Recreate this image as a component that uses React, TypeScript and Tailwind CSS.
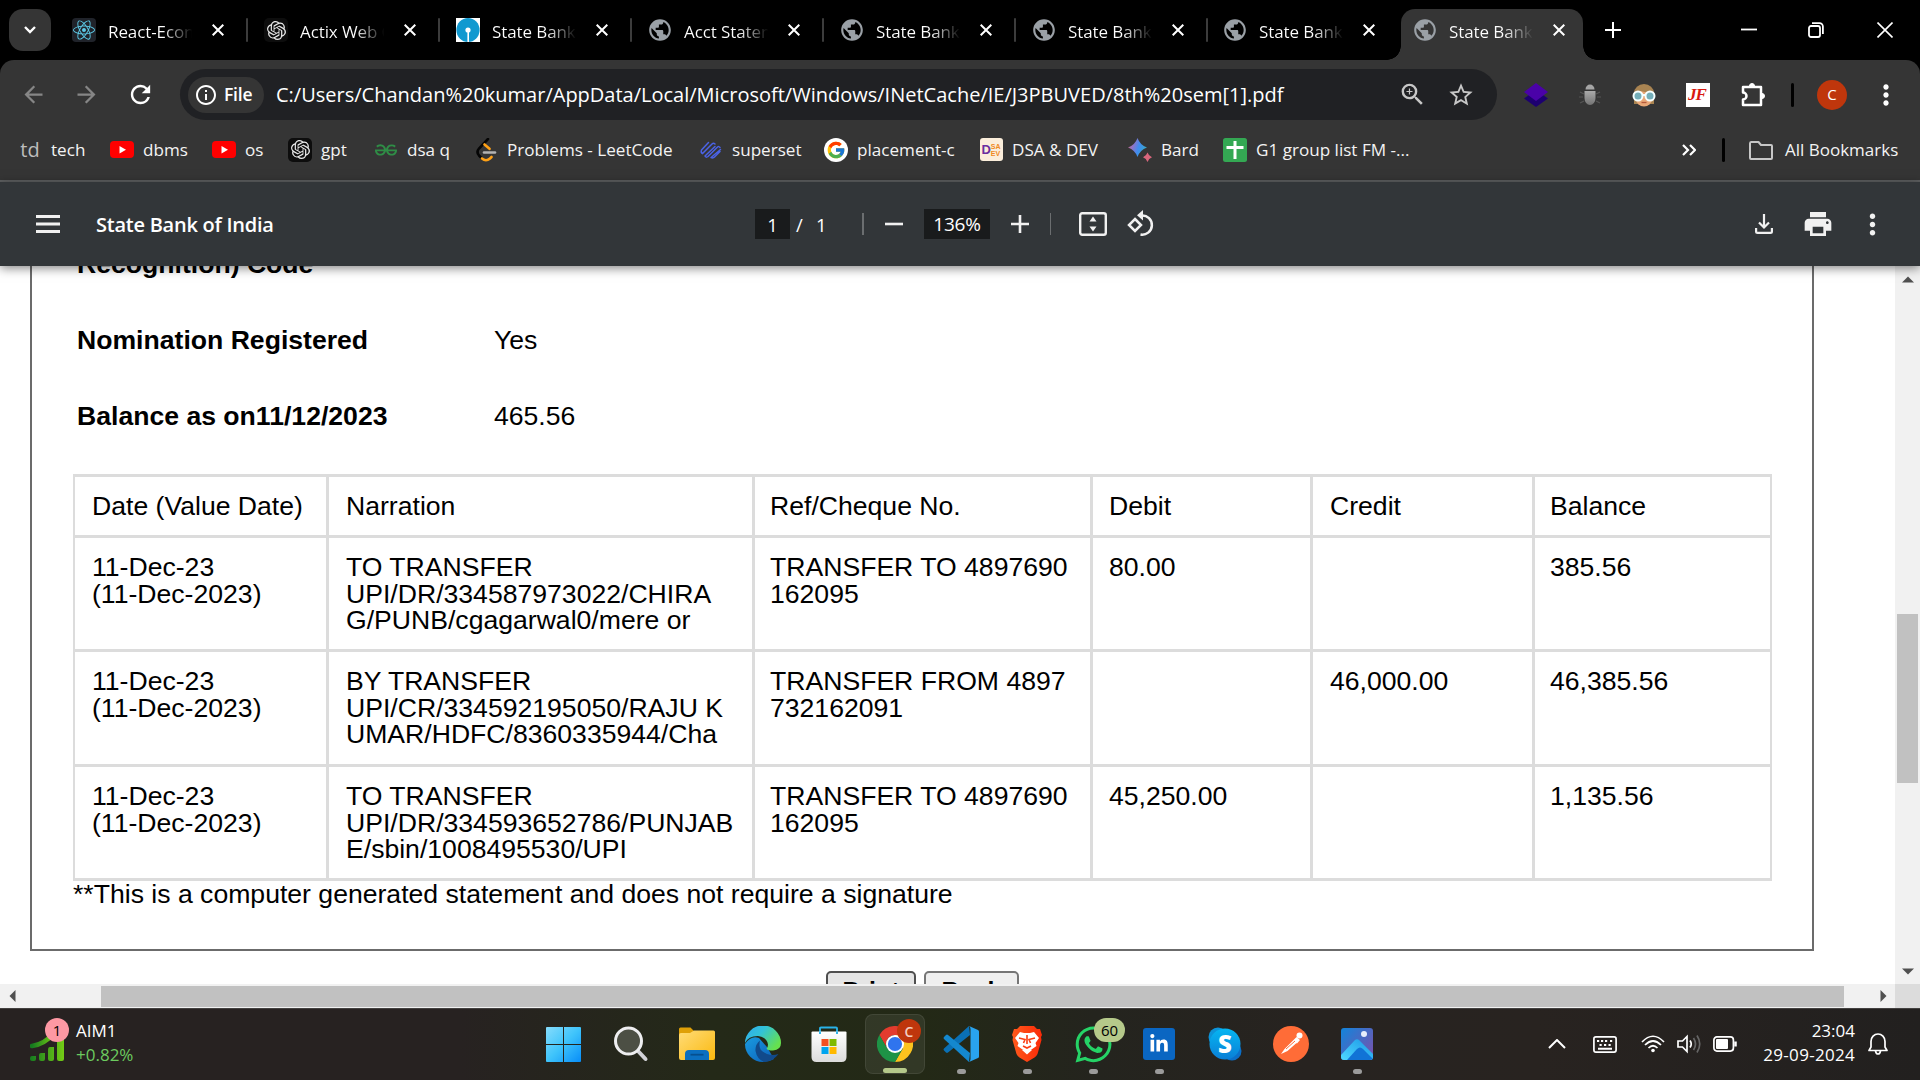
import type { ReactNode } from "react";
import {
  MdArrowBack, MdArrowForward, MdRefresh, MdZoomIn, MdStarBorder,
  MdMoreVert, MdPublic, MdInfoOutline, MdPrint,
} from "react-icons/md";
import { FaReact, FaWhatsapp, FaLinkedinIn } from "react-icons/fa";
import { SiOpenai, SiGeeksforgeeks } from "react-icons/si";
import { FcGoogle } from "react-icons/fc";

const OpenAi = ({ size, box }: { size: number; box: string }) => (
  <span className={`flex h-6 w-6 items-center justify-center rounded-[5px] text-[#e8e8e8] ${box}`}>
    <SiOpenai size={size} />
  </span>
);

const Globe = () => <MdPublic className="size-[26px] shrink-0 text-[#9aa0a6]" />;

const SbiIcon = () => (
  <svg viewBox="0 0 24 24" className="size-6">
    <rect width="24" height="24" fill="#fff" />
    <ellipse cx="12" cy="12" rx="11.6" ry="12" fill="#1099d0" />
    <circle cx="12" cy="12" r="2.6" fill="#fff" />
    <rect x="11.4" y="12" width="1.6" height="12" fill="#fff" />
  </svg>
);

const Cross = ({ className }: { className: string }) => (
  <svg viewBox="0 0 12 12" className={className} fill="none" stroke="#fff" strokeWidth="2">
    <path d="M.7.7l10.6 10.6M11.3.7L.7 11.3" />
  </svg>
);

function Tab({ icon, title, width, separator = true }: { icon: ReactNode; title: string; width: string; separator?: boolean }) {
  return (
    <div className={`flex h-full shrink-0 items-center ${width}`}>
      <span className="flex w-6 shrink-0 justify-center">{icon}</span>
      <span className="ml-3 w-[86px] overflow-hidden whitespace-nowrap bg-[linear-gradient(90deg,#fff_64%,transparent_98%)] bg-clip-text pt-[3px] text-[17px] tracking-[-0.1px] text-transparent">
        {title}
      </span>
      <Cross className="ml-[18px] size-3 shrink-0" />
      {separator && <span className="ml-[22px] h-6 w-[2px] rounded bg-[#3c3c3c]" />}
    </div>
  );
}

function TabStrip() {
  return (
    <div className="flex h-[60px] shrink-0 bg-black">
      <button className="mt-[9px] ml-[9px] flex h-[42px] w-[42px] shrink-0 items-center justify-center rounded-[14px] bg-[#353535]">
        <svg viewBox="0 0 12 8" className="h-[8px] w-3" fill="none" stroke="#fff" strokeWidth="2.4"><path d="M1 1l5 5 5-5" /></svg>
      </button>
      <div className="ml-[21px] flex">
        <Tab width="w-[192px]" title="React-Econ" icon={<span className="flex size-6 items-center justify-center rounded bg-[#20232a]"><FaReact size={22} color="#5cc9e6" /></span>} />
        <Tab width="w-[192px]" title="Actix Web C" icon={<OpenAi size={19} box="bg-[#0d0d0d]" />} />
        <Tab width="w-[192px]" title="State Bank" icon={<SbiIcon />} />
        <Tab width="w-[192px]" title="Acct Statem" icon={<Globe />} />
        <Tab width="w-[192px]" title="State Bank" icon={<Globe />} />
        <Tab width="w-[191px]" title="State Bank" icon={<Globe />} />
        <Tab width="w-[178px]" title="State Bank" icon={<Globe />} separator={false} />
      </div>
      <div className="relative mt-[9px] flex h-[51px] w-[182px] rounded-t-[14px] bg-[#353535] pb-[9px] pl-3">
        <Tab width="w-[160px]" title="State Bank" icon={<Globe />} separator={false} />
        <span className="absolute bottom-0 -left-[14px] size-[14px] bg-[radial-gradient(circle_at_0_0,transparent_13.5px,#353535_14px)]" />
        <span className="absolute -right-[14px] bottom-0 size-[14px] bg-[radial-gradient(circle_at_100%_0,transparent_13.5px,#353535_14px)]" />
      </div>
      <div className="flex h-[60px] flex-1 items-center">
        <svg viewBox="0 0 16 16" className="ml-[22px] size-4" stroke="#fff" strokeWidth="2"><path d="M8 0v16M0 8h16" /></svg>
        <svg viewBox="0 0 16 16" className="ml-[120px] size-4" stroke="#fff" strokeWidth="1.8"><path d="M0 7.5h16" /></svg>
        <svg viewBox="0 0 16 16" className="ml-[51px] size-4" fill="none" stroke="#fff" strokeWidth="1.8">
          <rect x="1" y="4" width="11" height="11" rx="2" />
          <path d="M4 1.2h7.5a3.4 3.4 0 0 1 3.400 3.400V12" />
        </svg>
        <svg viewBox="0 0 16 16" className="ml-[53px] size-4" stroke="#fff" strokeWidth="1.6"><path d="M.5.5l15 15M15.5.5l-15 15" /></svg>
      </div>
    </div>
  );
}

function AddressRow() {
  return (
    <div className="flex h-[69px] shrink-0 items-center">
      <MdArrowBack className="ml-[20px] size-[27px] text-[#868686]" />
      <MdArrowForward className="ml-[26px] size-[27px] text-[#868686]" />
      <MdRefresh className="ml-[26px] size-[29px] text-white" />
      <div className="ml-[25px] flex h-[51px] w-[1317px] items-center rounded-full bg-[#202124]">
        <span className="ml-2 flex h-9 w-[76px] items-center rounded-full bg-[#353535] pl-[6px]">
          <MdInfoOutline className="size-6 text-white" />
          <span className="ml-[6px] text-[17.500px] font-semibold tracking-[-0.2px] text-white">File</span>
        </span>
        <span className="ml-3 w-[1122px] whitespace-nowrap text-[20px] text-white">
          C:/Users/Chandan%20kumar/AppData/Local/Microsoft/Windows/INetCache/IE/J3PBUVED/8th%20sem[1].pdf
        </span>
        <MdZoomIn className="size-[29px] text-[#c7c7c7]" />
        <MdStarBorder className="ml-[20px] size-[28px] text-[#c7c7c7]" />
      </div>
      <svg viewBox="0 0 24 24" className="ml-[27px] size-6">
        <path d="M12 7l12 8.5L12 24 0 15.500z" fill="#1d0070" />
        <path d="M12 0l12 9-12 9L0 9z" fill="#4a02a8" />
      </svg>
      <svg viewBox="0 0 24 24" className="ml-[30px] size-6">
        <defs><linearGradient id="bug" x1="0" y1="0" x2="0" y2="1"><stop stopColor="#aaa" /><stop offset="1" stopColor="#737373" /></linearGradient></defs>
        <path d="M7.500 6.500a4.500 5 0 0 1 9 0z" fill="#a5a5a5" />
        <path d="M2 9l4 2M1 14h4M2 20l4-2M22 9l-4 2M23 14h-4M22 20l-4-2" stroke="#555" strokeWidth="1.200" />
        <path d="M6.500 8h11v7a5.500 7 0 0 1-11 0z" fill="url(#bug)" />
      </svg>
      <svg viewBox="0 0 24 24" className="ml-[30px] size-6">
        <path d="M2 21V10a10 9 0 0 1 20 0v11z" fill="#a98452" />
        <path d="M4 9l8-3 8 4v6a8 7.500 0 0 1-16 0z" fill="#e9a777" />
        <path d="M9.500 19.500h5" stroke="#b65a3c" strokeWidth="1.300" />
        <path d="M4 6q8 5 16 2L16 3 8 3z" fill="#a98452" />
        <g fill="#74aeb9" stroke="#f6ffff" strokeWidth="2"><circle cx="6" cy="13" r="4.500" /><circle cx="18" cy="13" r="4.500" /><path d="M10 12h4" /></g>
      </svg>
      <span className="ml-[30px] flex size-6 items-center justify-center bg-white pr-[2px] font-['Liberation_Serif'] text-[17px] font-bold italic tracking-[-1px] text-[#d9190f]">JF</span>
      <svg viewBox="0 0 26 26" className="ml-[30px] size-[26px]" fill="none" stroke="#fff" strokeWidth="2.500" strokeLinejoin="round">
        <path d="M3 5h18v18H3v-5.500a3.300 3.300 0 0 0 0-7z" />
        <path d="M9.500 4a2.500 2.500 0 0 1 5 0zM22 11.500a2.500 2.500 0 0 1 0 5z" fill="#fff" strokeWidth="1" />
      </svg>
      <span className="ml-[25px] h-6 w-[3px] rounded bg-black" />
      <span className="ml-[23px] flex size-[30px] items-center justify-center rounded-full bg-[#bf360c] text-[15px] text-white">C</span>
      <MdMoreVert className="ml-[23px] size-[32px] text-white" />
    </div>
  );
}

function Bookmark({ icon, label, width }: { icon: ReactNode; label: string; width: string }) {
  return (
    <div className={`flex shrink-0 items-center ${width}`}>
      <span className="flex w-6 shrink-0 items-center justify-center">{icon}</span>
      <span className="ml-[9px] whitespace-nowrap text-[17.100px] text-[#f3f3f3]">{label}</span>
    </div>
  );
}

const YouTube = () => (
  <svg viewBox="0 0 24 18" className="h-[18px] w-6"><rect width="24" height="17" rx="4" fill="#f00" /><path d="M9.500 5l6.500 3.700-6.500 3.700z" fill="#fff" /></svg>
);

function BookmarksBar() {
  return (
    <div className="flex h-[53px] shrink-0 items-center border-b-2 border-[#5f6162] pb-[9px]">
      <div className="flex pl-[18px]">
        <Bookmark width="w-[92px]" label="tech" icon={<span className="text-[20px] leading-none text-[#bdbdbd]">td</span>} />
        <Bookmark width="w-[102px]" label="dbms" icon={<YouTube />} />
        <Bookmark width="w-[76px]" label="os" icon={<YouTube />} />
        <Bookmark width="w-[86px]" label="gpt" icon={<OpenAi size={19} box="bg-[#0d0d0d]" />} />
        <Bookmark width="w-[100px]" label="dsa q" icon={<SiGeeksforgeeks size={22} color="#2f8d46" />} />
        <Bookmark width="w-[225px]" label="Problems - LeetCode" icon={
          <svg viewBox="0 0 24 24" className="size-6" fill="none" strokeWidth="2.600" strokeLinecap="round">
            <path d="M14 1L5 10.500q-3 3.500 0 7l3 3" stroke="#050505" />
            <path d="M10.500 6.500l5 4.300M8 20.500q4 3.500 8 0l1.500-1.500" stroke="#ffa116" />
            <path d="M10 14.500h11" stroke="#b3b3b3" />
          </svg>} />
        <Bookmark width="w-[125px]" label="superset" icon={
          <svg viewBox="0 0 24 24" className="size-6" fill="none" stroke="#4b63e6" strokeWidth="1.500" strokeLinecap="round">
            <path d="M2.500 12l7-7.500M2.500 12q-1 2.500 1 3.500L13 6q1.500-1.500 3 0M6 18L16 8.500M6 18q1 2 3 .5L18.500 9q1.500-1 2.500.5M12 19.500l9.500-8M12 19.500q2 1 3.500-.5l5.500-5.500" />
          </svg>} />
        <Bookmark width="w-[155px]" label="placement-c" icon={<span className="flex size-6 items-center justify-center rounded-full bg-white"><FcGoogle size={20} /></span>} />
        <Bookmark width="w-[149px]" label="DSA & DEV" icon={
          <span className="flex h-[23px] w-[23px] items-center justify-center rounded-[3px] bg-[#fbeedb] font-['Liberation_Sans'] font-bold leading-none">
            <span className="text-[13px] text-[#6b2fa0]">D</span>
            <span className="text-[7px] text-[#ef8a22]">SA<br />EV</span>
          </span>} />
        <Bookmark width="w-[95px]" label="Bard" icon={
          <svg viewBox="0 0 24 24" className="size-6">
            <defs>
              <linearGradient id="bard" x1="0" x2="1" y2=".3"><stop stopColor="#d96570" /><stop offset=".35" stopColor="#8f74c8" /><stop offset=".65" stopColor="#3f8cf0" /><stop offset="1" stopColor="#3aa5c8" /></linearGradient>
            </defs>
            <path d="M9.500 0q2.500 7 9.500 9.500-7 2.500-9.500 9.500-2.500-7-9.500-9.500 7-2.500 9.500-9.500z" fill="url(#bard)" />
            <path d="M19.500 14.500q1.200 3.500 4.500 4.700-3.300 1.200-4.500 4.800-1.200-3.600-4.500-4.800 3.300-1.200 4.500-4.700z" fill="#d9667c" />
          </svg>} />
        <Bookmark width="w-[459px]" label="G1 group list FM -..." icon={
          <svg viewBox="0 0 24 24" className="size-6"><rect width="24" height="24" rx="2.500" fill="#34a853" /><path d="M12 3v18M3.500 9.500h17" stroke="#fff" strokeWidth="3" /></svg>} />
      </div>
      <svg viewBox="0 0 14 12" className="h-3 w-[14px]" fill="none" stroke="#fff" strokeWidth="2.200"><path d="M1 1l5 5-5 5M8 1l5 5-5 5" /></svg>
      <span className="ml-[26px] h-6 w-[3px] rounded bg-black" />
      <svg viewBox="0 0 24 19" className="ml-[24px] h-[19px] w-6" fill="none" stroke="#c7c7c7" strokeWidth="2"><path d="M1 2.500V17q0 1 1 1h20q1 0 1-1V5q0-1-1-1H12L9.500 1H2Q1 1 1 2.500z" strokeLinejoin="round" /></svg>
      <span className="ml-3 whitespace-nowrap text-[17px] text-[#f3f3f3]">All Bookmarks</span>
    </div>
  );
}

function PdfToolbar() {
  return (
    <div className="relative z-10 flex h-[84px] shrink-0 items-center bg-[#323639] text-white shadow-[0_2px_10px_rgba(0,0,0,0.5)]">
      <svg viewBox="0 0 24 18" className="ml-9 h-[18px] w-6" stroke="#f1f1f1" strokeWidth="3"><path d="M0 1.500h24M0 9h24M0 16.500h24" /></svg>
      <span className="ml-9 w-[659px] pt-[2px] text-[20px] font-semibold tracking-[-0.250px]">State Bank of India</span>
      <span className="flex h-[30px] w-[35px] items-center justify-center bg-[#191b1c] pt-px text-[18.500px]">1</span>
      <span className="ml-[6px] w-[20px] pt-px text-[18.500px]">/</span>
      <span className="w-[46px] pt-px text-[18.500px]">1</span>
      <span className="h-[22px] w-[2px] bg-[#6b6e70]" />
      <svg viewBox="0 0 18 18" className="ml-[21px] size-[18px]" stroke="#f1f1f1" strokeWidth="2.600"><path d="M0 9h18" /></svg>
      <span className="ml-[21px] flex h-[30px] w-[66px] items-center justify-center bg-[#191b1c] pt-px text-[19px] tracking-[-0.200px]">136%</span>
      <svg viewBox="0 0 18 18" className="ml-[21px] size-[18px]" stroke="#f1f1f1" strokeWidth="2.600"><path d="M0 9h18M9 0v18" /></svg>
      <span className="ml-[21px] h-[22px] w-px bg-[#6b6e70]" />
      <svg viewBox="0 0 28 24" className="ml-[28px] h-6 w-7" fill="#f1f1f1">
        <rect x="1.200" y="1.200" width="25.600" height="21.600" rx="2" fill="none" stroke="#f1f1f1" strokeWidth="2.400" />
        <path d="M14 4.500l3.500 5h-7zM14 19.500l3.500-5h-7z" />
      </svg>
      <svg viewBox="0 0 27 27" className="mb-px ml-[20px] size-[27px]" fill="none" stroke="#f1f1f1" strokeWidth="2.500">
        <path d="M8 9l6 6-6 6-6-6z" />
        <path d="M14.500 5.500a9.600 9.600 0 1 1-1 19" />
        <path d="M16 0v10.500L10 5.300z" fill="#f1f1f1" stroke="none" />
      </svg>
      <svg viewBox="0 0 18 20" className="ml-[601px] h-5 w-[18px]" fill="none" stroke="#f1f1f1" strokeWidth="2.200"><path d="M9 0v13M4 8.500l5 5 5-5M1.100 14v3.500q0 1.400 1.400 1.400h13q1.400 0 1.400-1.400V14" /></svg>
      <MdPrint className="ml-[29px] size-[32px] text-[#f1f1f1]" />
      <MdMoreVert className="ml-[22px] size-[33px] text-[#f1f1f1]" />
    </div>
  );
}

const rows = [
  { date: "11-Dec-23", narration: ["TO TRANSFER", "UPI/DR/334587973022/CHIRA", "G/PUNB/cgagarwal0/mere or"], ref: ["TRANSFER TO 4897690", "162095"], debit: "80.00", credit: "", balance: "385.56", height: "h-[114px]" },
  { date: "11-Dec-23", narration: ["BY TRANSFER", "UPI/CR/334592195050/RAJU K", "UMAR/HDFC/8360335944/Cha"], ref: ["TRANSFER FROM 4897", "732162091"], debit: "", credit: "46,000.00", balance: "46,385.56", height: "h-[115px]" },
  { date: "11-Dec-23", narration: ["TO TRANSFER", "UPI/DR/334593652786/PUNJAB", "E/sbin/1008495530/UPI"], ref: ["TRANSFER TO 4897690", "162095"], debit: "45,250.00", credit: "", balance: "1,135.56", height: "h-[114px]" },
];

const cellPadding = ["pl-[17px]", "pl-[17px]", "pl-[15px]", "pl-[16px]", "pl-[17px]", "pl-[15px]"];

function Row({ cells, height }: { cells: string[][]; height: string }) {
  return (
    <div className={`grid grid-cols-[254px_426px_338px_220px_222px_235px] border-b-3 border-[#dcdcdc] ${height}`}>
      {cells.map((lines, i) => (
        <div key={i} className={`border-r-3 border-[#dcdcdc] pt-[16px] whitespace-nowrap last:border-r-0 ${cellPadding[i]}`}>
          {lines.map((line) => <div key={line}>{line}</div>)}
        </div>
      ))}
    </div>
  );
}

function Statement() {
  return (
    <div className="h-full w-[1895px] overflow-hidden bg-white font-['Liberation_Sans',Arial,sans-serif] text-[26.600px] leading-[26.600px] text-black">
      <div className="ml-[30px] flow-root h-[685px] w-[1784px] border-x-2 border-b-2 border-[#6b6b6b] px-[41px]">
        <div className="-mt-[17px] ml-[4px] grid grid-cols-[417px_1fr] leading-[30px]">
          <b className="h-[76px]">Recognition) Code</b><span />
          <b className="h-[76px]">Nomination Registered</b><span>Yes</span>
          <b className="h-[73px]">Balance as on11/12/2023</b><span>465.56</span>
        </div>
        <div className="w-[1699px] border-x-2 border-t-3 border-[#dcdcdc]">
          <Row height="h-[61px]" cells={[["Date (Value Date)"], ["Narration"], ["Ref/Cheque No."], ["Debit"], ["Credit"], ["Balance"]]} />
          {rows.map((r, i) => (
            <Row key={i} height={r.height} cells={[[r.date, "(11-Dec-2023)"], r.narration, r.ref, [r.debit], [r.credit], [r.balance]]} />
          ))}
        </div>
        <div>**This is a computer generated statement and does not require a signature</div>
      </div>
      <div className="mt-[20px] ml-[826px] flex gap-2 text-[25px] font-bold">
        <span className="flex h-[50px] w-[90px] justify-center rounded-[5px] border-2 border-[#4f4f4f] bg-[#e5e5e5] pt-[5px]">Print</span>
        <span className="flex h-[50px] w-[95px] justify-center rounded-[5px] border-2 border-[#767676] bg-[#efefef] pt-[5px]">Back</span>
      </div>
    </div>
  );
}

function Viewport() {
  return (
    <div className="flex min-h-0 flex-1 flex-col bg-white">
      <div className="flex h-[718px] shrink-0">
        <Statement />
        <div className="flex w-[25px] shrink-0 flex-col items-center bg-[#f1f1f1]">
          <svg viewBox="0 0 12 7" className="mt-[10px] h-[7px] w-3" fill="#505050"><path d="M0 6.500L6 .5l6 6z" /></svg>
          <span className="mt-[331px] h-[169px] w-[21px] bg-[#c1c1c1]" />
          <svg viewBox="0 0 12 7" className="mt-[185px] h-[7px] w-3" fill="#505050"><path d="M0 .5l6 6 6-6z" /></svg>
        </div>
      </div>
      <div className="flex h-6 shrink-0 items-center bg-[#f1f1f1]">
        <svg viewBox="0 0 7 12" className="ml-[9px] h-3 w-[7px]" fill="#505050"><path d="M6.500 0l-6 6 6 6z" /></svg>
        <span className="ml-[85px] h-[21px] w-[1743px] bg-[#c1c1c1]" />
        <svg viewBox="0 0 7 12" className="ml-9 h-3 w-[7px]" fill="#505050"><path d="M.5 0l6 6-6 6z" /></svg>
        <span className="ml-2 h-6 w-[25px] bg-[#dcdcdc]" />
      </div>
    </div>
  );
}

function TaskbarApp({ children, running, active }: { children: ReactNode; running?: boolean; active?: boolean }) {
  return (
    <div className={`relative flex h-[60px] w-[60px] shrink-0 items-center justify-center rounded-lg ${active ? "border border-[#ffffff14] bg-[#ffffff12]" : ""}`}>
      {children}
      {active && <span className="absolute bottom-0 h-[5px] w-6 rounded-full bg-[#b5c98a]" />}
      {running && <span className="absolute bottom-0 h-[5px] w-[9px] rounded-full bg-[#9b9b9b]" />}
    </div>
  );
}

function TaskbarApps() {
  return (
    <div className="flex gap-[6px]">
      <div className="mr-[2px]">
        <TaskbarApp>
          <svg viewBox="0 0 36 36" className="size-[35px]">
            <defs><linearGradient id="win" x1="0" y1="0" x2="1" y2="1"><stop stopColor="#86dcfc" /><stop offset=".5" stopColor="#3fc4fb" /><stop offset="1" stopColor="#078df8" /></linearGradient></defs>
            <path d="M1 0h16.500v17.500H0V1q0-1 1-1zM18.500 0H35q1 0 1 1v16.500H18.500zM0 18.500h17.500V36H1q-1 0-1-1zM18.500 18.500H36V35q0 1-1 1H18.500z" fill="url(#win)" />
          </svg>
        </TaskbarApp>
      </div>
      <TaskbarApp>
        <svg viewBox="0 0 36 36" className="size-9" fill="none">
          <path d="M25 25l7.500 8" stroke="#d3d3d8" strokeWidth="4" strokeLinecap="round" />
          <circle cx="15.500" cy="15" r="13" fill="#4c4f44" stroke="#eeeef0" strokeWidth="3" />
        </svg>
      </TaskbarApp>
      <TaskbarApp>
        <svg viewBox="0 0 36 34" className="h-[34px] w-9">
          <defs><linearGradient id="fold" x1="0" y1="0" x2="1" y2="1"><stop stopColor="#ffdc78" /><stop offset="1" stopColor="#fbb90f" /></linearGradient></defs>
          <path d="M0 8V2q0-1.500 1.500-1.500h10L15 4h19v8H0z" fill="#dfa008" />
          <path d="M0 8q0-2 2-2h9l4-2.500h19.500Q36 3.500 36 5V31q0 2-2 2H2q-2 0-2-2z" fill="url(#fold)" />
          <path d="M6 33v-6q0-4 4-4h16q4 0 4 4v6z" fill="#0b6fc0" />
          <path d="M11.500 27.700h13" stroke="#064f8f" strokeWidth="1.800" />
        </svg>
      </TaskbarApp>
      <TaskbarApp>
        <svg viewBox="0 0 36 36" className="size-9">
          <defs>
            <linearGradient id="e1" x1="0" y1="0" x2="1" y2=".6"><stop stopColor="#2fa9f0" /><stop offset=".45" stopColor="#32c2d8" /><stop offset="1" stopColor="#66e04e" /></linearGradient>
            <linearGradient id="e2" x1="0" y1="0" x2="1" y2="1"><stop stopColor="#1a9be0" /><stop offset="1" stopColor="#0b5fb8" /></linearGradient>
          </defs>
          <path d="M0 18A18 18 0 0 0 18 36q6 0 11-3l-7-12-8-9q-8-3-14 6z" fill="url(#e2)" />
          <path d="M0 17A18 17.500 0 0 1 36 17q0 7-8 7.500-5.500 0-6.500-1.800 1.500-1.500 1.500-4.200Q22 11 13 10 3.500 9.800 0 17z" fill="url(#e1)" />
          <path d="M15 14.500q-5 4-4.500 10.500 1.500 8 8.500 11 9-.5 14.500-8-6 2-11.500 0-8-3-7.500-9.500 0-2.500.5-4z" fill="#114a8b" />
        </svg>
      </TaskbarApp>
      <TaskbarApp>
        <svg viewBox="0 0 36 36" className="size-9">
          <defs><linearGradient id="store" x1="0" y1="0" x2="0" y2="1"><stop stopColor="#fff" /><stop offset="1" stopColor="#dcdcdc" /></linearGradient></defs>
          <path d="M9 8V2.500Q9 1.500 10 1.500h15q1 0 1 1V8" fill="none" stroke="#29b2e8" strokeWidth="1.900" />
          <path d="M.5 6.500q0-1 1-1h33q1 0 1 1V31q0 5-5 5h-25q-5 0-5-5z" fill="url(#store)" />
          <path d="M9 5.500V8M26 5.500V8" stroke="#29b2e8" strokeWidth="1.900" />
          <path d="M10.500 13h7v7h-7z" fill="#f25022" /><path d="M18.500 13h7v7h-7z" fill="#7fba00" />
          <path d="M10.500 21h7v7h-7z" fill="#00a4ef" /><path d="M18.500 21h7v7h-7z" fill="#ffb900" />
        </svg>
      </TaskbarApp>
      <TaskbarApp active>
        <svg viewBox="0 0 36 36" className="size-9">
          <path d="M18 9h15.600A18 18 0 0 1 18 36l7.800-13.500z" fill="#fcc31e" />
          <path d="M2.400 9A18 18 0 0 1 33.600 9H18a9 9 0 0 0-7.800 13.500z" fill="#e33b2e" />
          <path d="M2.400 9l7.800 13.500 7.800 4.500 7.800-4.500L18 36A18 18 0 0 1 2.400 9z" fill="#1e9346" />
          <circle cx="18" cy="18" r="9" fill="#fff" /><circle cx="18" cy="18" r="7.100" fill="#2f74ee" />
        </svg>
        <span className="absolute top-[4px] right-[3px] flex size-6 items-center justify-center rounded-full bg-[#bf360c] text-[14px] font-semibold text-[#f3cfc2]">C</span>
      </TaskbarApp>
      <TaskbarApp running>
        <svg viewBox="0 0 36 36" className="size-9">
          <path d="M26 0L1 22.500q-1 1 0 2l2 2q1 .8 2 0L27 9z" fill="#0a70b5" />
          <path d="M26 36L1 13q-1-1 0-2l2-2q1-.8 2 0l22 18z" fill="#1488cf" />
          <path d="M26 0l9 4q1 .5 1 1.500v25q0 1-1 1.500l-9 4q1.500-1 1.500-3V3q0-2-1.500-3z" fill="#29a3ee" />
        </svg>
      </TaskbarApp>
      <TaskbarApp running>
        <svg viewBox="0 0 30 36" className="h-9 w-[30px]">
          <defs><linearGradient id="brave"><stop stopColor="#ff5a1c" /><stop offset="1" stopColor="#fb2a08" /></linearGradient></defs>
          <path d="M8 0h14l3 3h3l2 6-1 2 .5 3-4 14q-1 2-3 3.500L15 36l-7.500-4.500q-2-1.500-3-3.500L.500 14 1 11 0 9l2-6h3z" fill="url(#brave)" />
          <path d="M8 6l4 1h6l4-1 5 6-3.500 5 1 3-5 3.500h-9L5.500 20l1-3L3 12zM10 24l5-1.500L20 24l-5 4.500z" fill="#fff" />
          <path d="M7 12l6 1.500-1.500 3.500M23 12l-6 1.500 1.500 3.500M15 9v9M11 20l4 2 4-2" stroke="#fb3d12" strokeWidth="1.600" fill="none" />
        </svg>
      </TaskbarApp>
      <TaskbarApp running>
        <FaWhatsapp size={41} color="#25d366" />
        <span className="absolute top-[4px] -right-[2px] flex h-6 w-[31px] items-center justify-center rounded-full bg-[#b5c98a] text-[15px] text-black">60</span>
      </TaskbarApp>
      <TaskbarApp running>
        <span className="flex size-8 items-center justify-center rounded-[3px] bg-[#0a66c2] text-white"><FaLinkedinIn size={20} /></span>
      </TaskbarApp>
      <TaskbarApp>
        <span className="relative flex size-[34px] items-center justify-center pb-px text-[24px] font-extrabold text-white">
          <svg viewBox="0 0 34 34" className="absolute inset-0 size-[34px]">
            <defs><linearGradient id="sky" x1="0" y1="0" x2="0" y2="1"><stop stopColor="#05b6f2" /><stop offset="1" stopColor="#0a7fd6" /></linearGradient></defs>
            <circle cx="10" cy="10" r="9.500" fill="#0c93d9" /><circle cx="24" cy="24" r="9.500" fill="#0b6fc8" /><circle cx="17" cy="17" r="15.500" fill="url(#sky)" />
          </svg>
          <span className="relative">S</span>
        </span>
      </TaskbarApp>
      <TaskbarApp>
        <svg viewBox="0 0 36 36" className="size-9">
          <circle cx="18" cy="18" r="18" fill="#ff6c37" />
          <path d="M8 28l3.500-5 9-9 3 3-9 8zM20.500 14l3-3 3.500 3-3 3.500z" fill="#fff" />
          <circle cx="26.500" cy="9.500" r="3" fill="#fff" />
          <path d="M13 23l9-8" stroke="#ff6c37" />
        </svg>
      </TaskbarApp>
      <TaskbarApp running>
        <svg viewBox="0 0 32 32" className="size-8">
          <defs>
            <linearGradient id="ph" x1="0" y1="0" x2="1" y2=".8"><stop stopColor="#1185dc" /><stop offset="1" stopColor="#7553ae" /></linearGradient>
            <linearGradient id="mt" x1="0" y1="1" x2="1" y2="0"><stop stopColor="#4fd8ff" /><stop offset="1" stopColor="#1a97e6" /></linearGradient>
            <clipPath id="pc"><rect width="32" height="32" rx="3" /></clipPath>
          </defs>
          <g clipPath="url(#pc)">
            <rect width="32" height="32" fill="url(#ph)" />
            <path d="M0 27l13.500-14.500q2.500-2.500 5 0L32 26v6H0z" fill="url(#mt)" />
            <path d="M6 32l10-11q3-3 6 0l10 10v1z" fill="#1173d6" />
            <circle cx="23" cy="6" r="3" fill="#e8eefb" />
          </g>
        </svg>
      </TaskbarApp>
    </div>
  );
}

function Taskbar() {
  return (
    <div className="flex h-[72px] shrink-0 items-center border-t border-[#434140] bg-[linear-gradient(90deg,#272221_0%,#272221_24%,#242918_37%,#232916_48%,#24241e_57%,#272320_68%,#282320_80%,#22201f_100%)] pb-px text-white">
      <div className="relative ml-[30px] h-[52px] w-[46px] shrink-0">
        <svg viewBox="0 0 34 30" className="absolute top-[13px] left-0 h-[30px] w-[34px]">
          <defs><linearGradient id="stk"><stop stopColor="#157a1f" /><stop offset="1" stopColor="#74cc15" /></linearGradient></defs>
          <path d="M2 15Q15 13 24 2" stroke="url(#stk)" strokeWidth="4.500" strokeLinecap="round" fill="none" />
          <path d="M0 27q0-2 2-2h4v3q0 2-2 2H2q-2 0-2-2zM9 24q0-2 2-2h4v6q0 2-2 2h-2q-2 0-2-2zM18 19q0-3 2-3h4v12q0 2-2 2h-2q-2 0-2-2zM27 10q0-2 2-2h5v20q0 2-2 2h-3q-2 0-2-2z" fill="url(#stk)" />
        </svg>
        <span className="absolute top-0 left-[15px] flex size-6 items-center justify-center rounded-full bg-[#fd98a3] text-[15px] text-black">1</span>
      </div>
      <div className="w-[457px] pb-[2px] text-[17px] leading-6">
        <div>AIM1</div>
        <div className="text-[#6ccb5f]">+0.82%</div>
      </div>
      <TaskbarApps />
      <div className="ml-[161px] flex items-center">
        <svg viewBox="0 0 18 10" className="h-[10px] w-[18px]" fill="none" stroke="#fff" strokeWidth="2"><path d="M1 9l8-8 8 8" /></svg>
        <svg viewBox="0 0 24 17" className="ml-[27px] h-[17px] w-6" fill="none" stroke="#fff" strokeWidth="1.700">
          <rect x=".9" y=".9" width="22.200" height="15.200" rx="2" />
          <path d="M4 5h2.200M8 5h2.200M12 5h2.200M17 5h2.200M6.500 9h2.200M11 9h2.200M15.500 9h2.200M5 12.700h14" strokeWidth="2" />
        </svg>
        <svg viewBox="0 0 24 18" className="ml-[24px] h-[18px] w-6" fill="none" stroke="#fff" strokeWidth="1.700">
          <path d="M1 7Q12-4.500 23 7M4 10q8-8 16 0M7.500 13q4.500-4.500 9 0" /><circle cx="12" cy="15.500" r="1.800" fill="#fff" stroke="none" />
        </svg>
        <svg viewBox="0 0 25 20" className="ml-3 h-5 w-[25px]" fill="none" stroke="#fff" strokeWidth="1.700">
          <path d="M1 7h4.500L10 2.500v15L5.500 13H1zM13 6.500q2.500 3.500 0 7" /><path d="M16.500 4q4 6 0 12M20 1.500q5.500 8.500 0 17" stroke="#666" />
        </svg>
        <svg viewBox="0 0 24 16" className="ml-[11px] h-4 w-6" fill="none" stroke="#fff" strokeWidth="1.700">
          <rect x=".9" y=".9" width="19.500" height="14.200" rx="3" /><rect x="3" y="3" width="12" height="10" rx="1" fill="#fff" stroke="none" /><path d="M22.500 5.500v5" strokeWidth="2.500" />
        </svg>
        <div className="ml-[18px] w-[100px] pb-[2px] text-right text-[17px] leading-6 whitespace-nowrap">
          <div>23:04</div>
          <div className="tracking-[0.300px]">29-09-2024</div>
        </div>
        <svg viewBox="0 0 20 22" className="ml-[13px] h-[22px] w-5" fill="none" stroke="#fff" strokeWidth="1.700" strokeLinejoin="round">
          <path d="M3 14V8.500a7 7.500 0 0 1 14 0V14l2 3.500H1zM7.500 18q.5 3 2.500 3t2.500-3" />
        </svg>
      </div>
    </div>
  );
}

export default function App() {
  return (
    <div className="flex h-[1080px] w-[1920px] flex-col overflow-hidden bg-black font-['Open_Sans','Noto_Sans',sans-serif]">
      <TabStrip />
      <div className="flex h-[122px] shrink-0 flex-col rounded-t-[14px] bg-[#353535]">
        <AddressRow />
        <BookmarksBar />
      </div>
      <PdfToolbar />
      <Viewport />
      <Taskbar />
    </div>
  );
}
